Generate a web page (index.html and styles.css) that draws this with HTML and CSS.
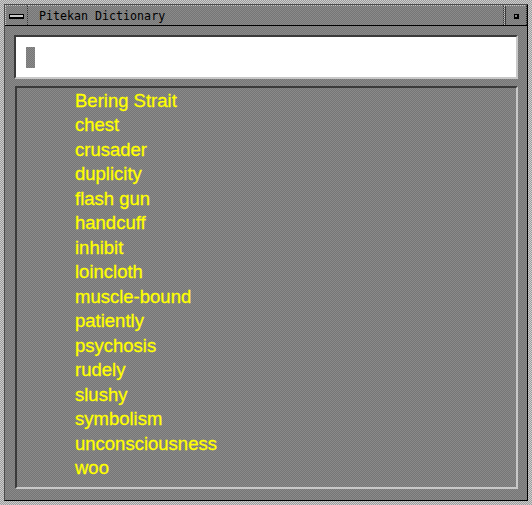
FILE: index.html
```html
<!DOCTYPE html>
<html>
<head>
<meta charset="utf-8">
<link rel="stylesheet" href="styles.css">
</head>
<body>
<div class="window">
  <div class="inner">
    <div class="titlebar">
      <div class="tb-btn menu"><span class="menu-icon"></span></div>
      <div class="title">Pitekan Dictionary</div>
      <div class="tb-btn iconify"><span class="iconify-icon"></span></div>
    </div>
    <div class="client">
      <div class="entry"><span class="cursor"></span></div>
      <div class="list">
        <div class="item">Bering Strait</div>
        <div class="item">chest</div>
        <div class="item">crusader</div>
        <div class="item">duplicity</div>
        <div class="item">flash gun</div>
        <div class="item">handcuff</div>
        <div class="item">inhibit</div>
        <div class="item">loincloth</div>
        <div class="item">muscle-bound</div>
        <div class="item">patiently</div>
        <div class="item">psychosis</div>
        <div class="item">rudely</div>
        <div class="item">slushy</div>
        <div class="item">symbolism</div>
        <div class="item">unconsciousness</div>
        <div class="item">woo</div>
      </div>
    </div>
  </div>
</div>
</body>
</html>
```

FILE: styles.css
```css
html, body {
  margin: 0;
  padding: 0;
}
body {
  width: 532px;
  height: 505px;
  overflow: hidden;
  background: #808080;
}
.window {
  width: 532px;
  height: 505px;
  box-sizing: border-box;
  padding: 4px;
  background-color: #b4b4b4;
  background-image: repeating-conic-gradient(#9c9c9c 0 25%, #cdcdcd 0 50%);
  background-size: 2px 2px;
}
.inner {
  height: 100%;
  box-sizing: border-box;
  border-top: 1px solid #4c4c4c;
  border-left: 1px solid #4c4c4c;
  border-right: 1px solid #000;
  border-bottom: 1px solid #000;
  display: flex;
  flex-direction: column;
  background-color: #808080;
  background-image: repeating-conic-gradient(#767676 0 25%, #8a8a8a 0 50%);
  background-size: 2px 2px;
}
.titlebar {
  height: 21px;
  box-sizing: border-box;
  border-bottom: 1px solid #000;
  display: flex;
  flex: none;
}
.tb-btn {
  width: 23px;
  flex: none;
  display: flex;
  align-items: center;
  justify-content: center;
  box-sizing: border-box;
}
.menu {
  border-right: 1px dotted #2e2e2e;
  border-top: 1px dotted #c8c8c8;
  border-left: 1px dotted #c8c8c8;
}
.iconify {
  border-left: 1px dotted #c8c8c8;
  border-right: 1px dotted #2e2e2e;
  border-top: 1px dotted #c8c8c8;
  box-shadow: inset 1px 0 0 #3a3a3a;
}
.menu-icon {
  display: block;
  width: 15px;
  height: 5px;
  box-sizing: border-box;
  border: 1px solid #000;
  border-bottom-width: 2px;
  background: #c8c8c8;
  margin-top: 1px;
}
.iconify-icon {
  display: block;
  width: 5px;
  height: 5px;
  background: #000;
  position: relative;
  margin-left: 2px;
  margin-top: 1px;
}
.iconify-icon::after {
  content: "";
  position: absolute;
  left: 1px;
  top: 1px;
  width: 2px;
  height: 2px;
  background: #8a8a8a;
}
.title {
  flex: 1;
  box-sizing: border-box;
  border-top: 1px dotted #c8c8c8;
  border-right: 1px dotted #2e2e2e;
  padding-left: 11px;
  font-family: "DejaVu Sans Mono", "Liberation Mono", monospace;
  font-size: 11.65px;
  line-height: 19px;
  padding-top: 1px;
  color: #000;
  white-space: nowrap;
}
.client {
  flex: 1;
  display: flex;
  flex-direction: column;
}
.entry {
  margin: 9px 0 0 9px;
  width: 504px;
  height: 44px;
  box-sizing: border-box;
  border-top: 2px solid #3a3a3a;
  border-left: 2px solid #3a3a3a;
  border-right: 2px solid #c8c8c8;
  border-bottom: 2px solid #c8c8c8;
  background: #fff;
  padding: 10px 0 0 10px;
}
.cursor {
  display: block;
  width: 9px;
  height: 21px;
  background-color: #7f7f7f;
  background-image: repeating-conic-gradient(#777 0 25%, #8c8c8c 0 50%);
  background-size: 2px 2px;
}
.list {
  margin: 7px 0 0 10px;
  width: 503px;
  height: 403px;
  box-sizing: border-box;
  border-top: 2px solid #3a3a3a;
  border-left: 2px solid #3a3a3a;
  border-right: 2px solid #c8c8c8;
  border-bottom: 2px solid #c8c8c8;
  padding-left: 58px;
  padding-top: 1px;
  font-family: "Liberation Sans", Arial, sans-serif;
  font-size: 18.5px;
  line-height: 24.47px;
  color: #ffff00;
  -webkit-text-stroke: 0.3px #ffff00;
}
.item {
  white-space: nowrap;
}
```
